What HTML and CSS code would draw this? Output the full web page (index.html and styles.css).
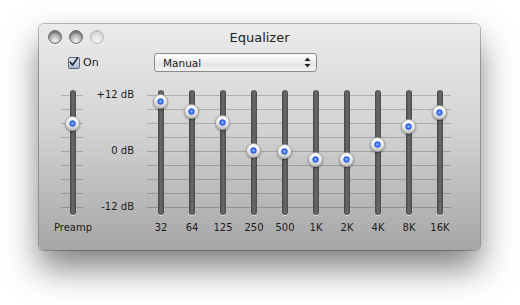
FILE: index.html
```html
<!DOCTYPE html>
<html lang="en">
<head>
  <meta charset="UTF-8" />
  <title>Equalizer</title>
  <link rel="stylesheet" href="styles.css">
</head>
<body>

  <div class="window">
    <div class="titlebar">
      <div class="lights">
        <span class="light"></span>
        <span class="light"></span>
        <span class="light off"></span>
      </div>
      <div class="title">Equalizer</div>
      <div></div>
    </div>

    <div class="controls">
      <label class="check">
        <span class="box">
          <svg width="12" height="12" viewBox="0 0 12 12"><path d="M2.5 6.2 L5 9.2 L10.5 1.5" fill="none" stroke="#1e2230" stroke-width="1.8" stroke-linecap="round" stroke-linejoin="round"/></svg>
        </span>
        On
      </label>
      <div class="select">
        <span>Manual</span>
        <svg width="7" height="11" viewBox="0 0 7 11"><path d="M3.5 0.5 L6.5 4 L0.5 4 Z M0.5 7 L6.5 7 L3.5 10.5 Z" fill="#222"/></svg>
      </div>
    </div>

    <div class="eq">
      <div class="col preamp">
        <div class="slider">
          <span class="track"></span>
          <span class="knob" style="top: 26px"></span>
        </div>
        <div class="name">Preamp</div>
      </div>

      <div class="scale">
        <span>+12 dB</span>
        <span>0 dB</span>
        <span>-12 dB</span>
      </div>

      <div class="bands">
        <div class="col"><div class="slider"><span class="track"></span><span class="knob" style="top: 4px"></span></div><div class="name">32</div></div>
        <div class="col"><div class="slider"><span class="track"></span><span class="knob" style="top: 14px"></span></div><div class="name">64</div></div>
        <div class="col"><div class="slider"><span class="track"></span><span class="knob" style="top: 25px"></span></div><div class="name">125</div></div>
        <div class="col"><div class="slider"><span class="track"></span><span class="knob" style="top: 53px"></span></div><div class="name">250</div></div>
        <div class="col"><div class="slider"><span class="track"></span><span class="knob" style="top: 54px"></span></div><div class="name">500</div></div>
        <div class="col"><div class="slider"><span class="track"></span><span class="knob" style="top: 62px"></span></div><div class="name">1K</div></div>
        <div class="col"><div class="slider"><span class="track"></span><span class="knob" style="top: 62px"></span></div><div class="name">2K</div></div>
        <div class="col"><div class="slider"><span class="track"></span><span class="knob" style="top: 47px"></span></div><div class="name">4K</div></div>
        <div class="col"><div class="slider"><span class="track"></span><span class="knob" style="top: 29px"></span></div><div class="name">8K</div></div>
        <div class="col"><div class="slider"><span class="track"></span><span class="knob" style="top: 15px"></span></div><div class="name">16K</div></div>
      </div>
    </div>
  </div>

</body>
</html>
```

FILE: styles.css
```css
body {
  margin: 0;
  padding: 24px 0 0 39px;
  min-height: 305px;
  box-sizing: border-box;
  background: #fff;
  font-family: "DejaVu Sans", "Liberation Sans", sans-serif;
  color: #1c1c1c;
}
.window {
  width: 441px;
  height: 226px;
  box-sizing: border-box;
  border-radius: 5px;
  background: linear-gradient(to bottom, #ebebeb 0%, #d4d4d4 45%, #a6a6a6 100%);
  box-shadow: 0 0 0 1px rgba(0, 0, 0, 0.25), 0 18px 34px rgba(0, 0, 0, 0.5);
}
.titlebar {
  height: 26px;
  display: grid;
  grid-template-columns: 1fr auto 1fr;
  align-items: center;
}
.lights {
  display: flex;
  gap: 7px;
  padding-left: 9px;
}
.light {
  width: 14px;
  height: 14px;
  box-sizing: border-box;
  border-radius: 50%;
  border: 1px solid #6e6e6e;
  background: radial-gradient(circle at 50% 80%, #f2f2f2 0%, #b8b8b8 45%, #8a8a8a 100%);
  box-shadow: inset 0 2px 2px rgba(0, 0, 0, 0.3), 0 1px 0 rgba(255, 255, 255, 0.7);
}
.light.off {
  border-color: #b9b9b9;
  background: radial-gradient(circle at 50% 80%, #f6f6f6 0%, #dcdcdc 60%, #cfcfcf 100%);
  box-shadow: inset 0 1px 1px rgba(0, 0, 0, 0.1);
}
.title {
  font-size: 13px;
  color: #222;
}
.controls {
  margin-top: 3px;
  height: 19px;
  display: flex;
  align-items: center;
  padding-left: 29px;
}
.check {
  display: flex;
  align-items: center;
  gap: 3px;
  font-size: 11px;
  width: 86px;
}
.box {
  width: 12px;
  height: 12px;
  box-sizing: border-box;
  border: 1px solid #5d6475;
  border-radius: 2px;
  background: linear-gradient(to bottom, #dde5f1, #a9b9d2);
  display: flex;
}
.box svg {
  margin: -2px 0 0 -1px;
}
.select {
  width: 163px;
  height: 19px;
  box-sizing: border-box;
  border: 1px solid #8b8b8b;
  border-radius: 3px;
  background: linear-gradient(to bottom, #ffffff, #ececec 50%, #e2e2e2 51%, #f2f2f2);
  display: flex;
  align-items: center;
  justify-content: space-between;
  padding: 0 5px 0 8px;
  font-size: 10.5px;
}
.eq {
  display: flex;
  margin-top: 18px;
  padding-left: 12px;
}
.col {
  width: 28px;
  display: flex;
  flex-direction: column;
  align-items: center;
}
.preamp {
  width: 44px;
}
.slider {
  position: relative;
  width: 28px;
  height: 125px;
}
.preamp .slider::before {
  content: "";
  position: absolute;
  left: 2px;
  top: 5px;
  width: 22px;
  height: 113px;
  background: repeating-linear-gradient(to bottom, rgba(0, 0, 0, 0.2) 0 1px, transparent 1px 14px);
}
.track {
  position: absolute;
  left: 11px;
  top: 0;
  width: 6px;
  height: 125px;
  border-radius: 3px;
  background: linear-gradient(to right, #474747, #6b6b6b 50%, #4c4c4c);
  box-shadow: 0 1px 0 rgba(255, 255, 255, 0.6);
}
.knob {
  position: absolute;
  left: 6px;
  width: 15px;
  height: 15px;
  box-sizing: border-box;
  border-radius: 50%;
  border: 1px solid #a2a2a2;
  background:
    radial-gradient(circle at 50% 50%, #9ec0ff 0, #3f74ff 1.8px, #1f4fd8 2.8px, transparent 3.4px),
    linear-gradient(to bottom, #ffffff, #e6e6e6 55%, #c4c4c4);
  box-shadow: 0 1px 2px rgba(0, 0, 0, 0.4);
}
.name {
  margin-top: 7px;
  font-size: 10px;
  line-height: 12px;
  white-space: nowrap;
}
.scale {
  width: 39px;
  height: 124px;
  margin-top: -1px;
  display: flex;
  flex-direction: column;
  justify-content: space-between;
  align-items: flex-end;
  font-size: 10px;
  line-height: 12px;
  white-space: nowrap;
}
.bands {
  position: relative;
  margin-left: 13px;
  width: 304px;
  display: flex;
  gap: 3px;
}
.bands::before {
  content: "";
  position: absolute;
  left: 0;
  right: 0;
  top: 5px;
  height: 113px;
  background: repeating-linear-gradient(to bottom, rgba(0, 0, 0, 0.2) 0 1px, transparent 1px 14px);
}
```
